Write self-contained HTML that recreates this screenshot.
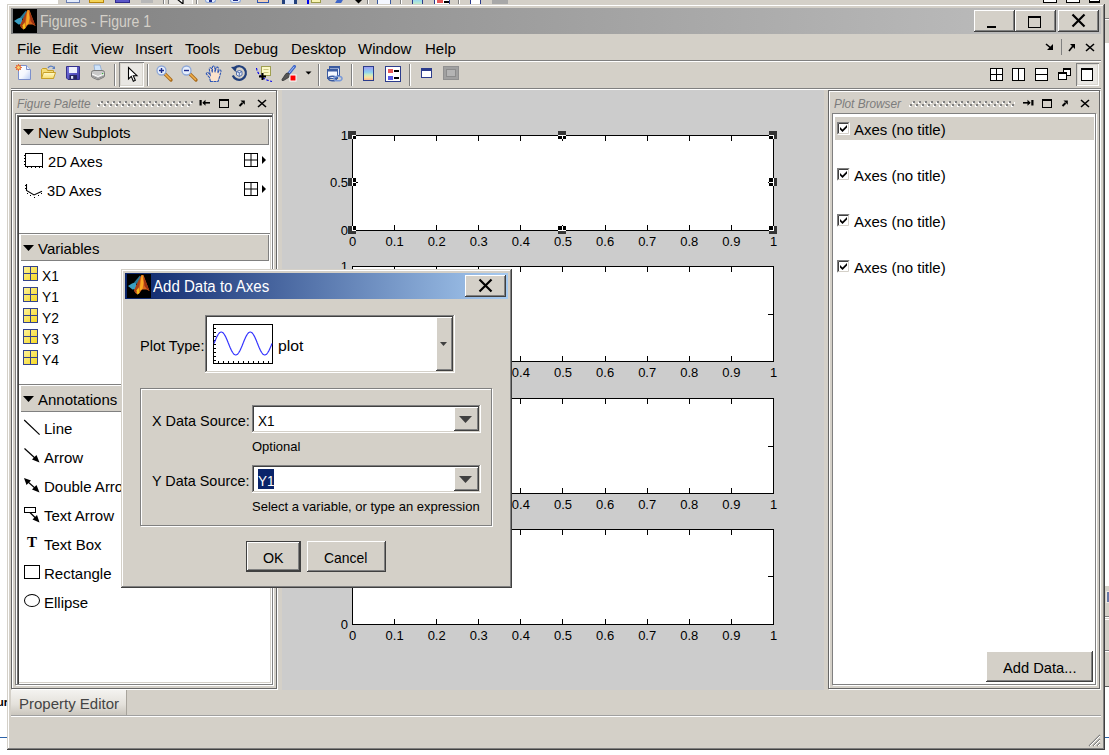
<!DOCTYPE html>
<html><head><meta charset="utf-8"><title>Figures - Figure 1</title>
<style>
html,body{margin:0;padding:0}
body{width:1109px;height:755px;overflow:hidden;background:#fff;position:relative;font-family:"Liberation Sans",sans-serif;font-size:15px;color:#000}
div,span,svg{position:absolute;box-sizing:border-box}
.t{white-space:nowrap;line-height:1;transform-origin:0 0}
.face{background:#d4d0c8}
.raised{box-shadow:inset -1px -1px #404040,inset 1px 1px #d4d0c8,inset -2px -2px #808080,inset 2px 2px #fff}
.btn{background:#d4d0c8;box-shadow:inset -1px -1px #404040,inset 1px 1px #fff,inset -2px -2px #808080,inset 2px 2px #d4d0c8}
.sunken{box-shadow:inset -1px -1px #fff,inset 1px 1px #808080,inset -2px -2px #d4d0c8,inset 2px 2px #404040}
.hl{background:#808080;height:1px}
.wl{background:#fff;height:1px}
.vl{background:#808080;width:1px}
.vw{background:#fff;width:1px}
.ax{background:#fff;border:1px solid #000}
.tk{background:#000}
.xl{font-size:13px;white-space:nowrap;line-height:1;width:40px;text-align:center}
.yl{font-size:13px;white-space:nowrap;line-height:1;width:40px;text-align:right}
.hd{background:#404040;width:7px;height:7px}
</style></head><body>
<!-- background windows behind -->
<div class="face" style="left:58px;top:0;width:1051px;height:5px"></div>
<div class="face" style="left:1105px;top:0;width:4px;height:43px"></div>
<div style="left:1105px;top:18px;width:4px;height:1px;background:#808080"></div><div style="left:1105px;top:19px;width:4px;height:1px;background:#fff"></div>
<div class="face" style="left:1105px;top:586px;width:4px;height:100px"></div><div style="left:1105px;top:686px;width:4px;height:1px;background:#606060"></div><div style="left:1106px;top:591px;width:3px;height:12px;background:#ece9e0"></div><div style="left:1107px;top:592px;width:2px;height:10px;background:#6878a8"></div>
<div style="left:1105px;top:616px;width:4px;height:1px;background:#808080"></div><div style="left:1105px;top:617px;width:4px;height:1px;background:#fff"></div><div style="left:1105px;top:619px;width:4px;height:1px;background:#fff"></div>
<div style="left:1105px;top:650px;width:4px;height:1px;background:#808080"></div><div style="left:1105px;top:651px;width:4px;height:1px;background:#fff"></div>
<div style="left:1105px;top:737px;width:4px;height:1px;background:#2c62a8"></div>
<div style="left:0;top:737px;width:7px;height:1px;background:#2c62a8"></div>
<span class="t" style="left:-3px;top:697px;font-size:11px;font-weight:bold">ur</span>
<!-- top strip icon fragments -->
<div style="left:66px;top:0;width:14px;height:3px;background:#e4ecfc;border:1px solid #6b7fb3;border-top:0"></div>
<div style="left:89px;top:0;width:15px;height:3px;background:#f4d458;border:1px solid #b8860b;border-top:0"></div>
<div style="left:115px;top:0;width:15px;height:3px;background:#5a55c8;border:1px solid #2f2a8c;border-top:0"></div>
<div style="left:141px;top:0;width:12px;height:3px;background:#b8b8b8"></div>
<div class="vl" style="left:163px;top:0;height:4px"></div><div class="vw" style="left:164px;top:0;height:4px"></div>
<div style="left:168px;top:0;width:25px;height:4px;background:#e9e7e3;border-right:1px solid #fff;border-left:1px solid #808080"></div>
<svg style="left:176px;top:0" width="11" height="4" viewBox="0 0 11 4"><path d="M1 -1 L7 4 L7 0" fill="#fff" stroke="#000" stroke-width="1.200"/></svg>
<div class="vl" style="left:196px;top:0;height:4px"></div><div class="vw" style="left:197px;top:0;height:4px"></div>
<div style="left:205px;top:0;width:11px;height:3px;background:#e6eefc;border:1px solid #8ea8d8;border-top:0;border-radius:0 0 6px 6px"></div><div style="left:209px;top:0;width:3px;height:2px;background:#1c2c8c"></div>
<div style="left:230px;top:0;width:11px;height:3px;background:#e6eefc;border:1px solid #8ea8d8;border-top:0;border-radius:0 0 6px 6px"></div><div style="left:233px;top:0;width:5px;height:1px;background:#1c2c8c"></div>
<div style="left:257px;top:0;width:12px;height:3px;background:#f0d0b8;border:1px solid #2c56b4;border-top:0"></div>
<div style="left:282px;top:0;width:15px;height:4px;border-left:3px solid #22407c;border-right:3px solid #22407c;background:#dfe8f8"></div>
<div style="left:307px;top:0;width:2px;height:4px;background:#0000ee"></div><div style="left:311px;top:0;width:10px;height:3px;background:#f8f4b4;border:1px solid #9c9c48;border-top:0"></div>
<div style="left:336px;top:0;width:6px;height:3px;background:#3e66c8;transform:skewX(-30deg)"></div>
<svg style="left:355px;top:0" width="7" height="4" viewBox="0 0 7 4"><path d="M0 0 L7 0 L3.500 3.500 Z" fill="#000"/></svg>
<div class="vl" style="left:367px;top:0;height:4px"></div><div class="vw" style="left:368px;top:0;height:4px"></div>
<div style="left:377px;top:0;width:14px;height:4px;background:#f4f7ff;border:1px solid #3a5aa0;border-top:0;border-bottom:0"></div>
<div class="vl" style="left:400px;top:0;height:4px"></div><div class="vw" style="left:401px;top:0;height:4px"></div>
<div style="left:412px;top:0;width:11px;height:4px;background:linear-gradient(#98d8f0,#c0ecc8);border:1px solid #2c3c8c;border-top:0;border-bottom:0"></div>
<div style="left:434px;top:0;width:16px;height:4px;background:#fff;border:1px solid #2c3c8c;border-top:0;border-bottom:0"></div><div style="left:437px;top:0;width:6px;height:3px;background:#e85858"></div><div style="left:444px;top:1px;width:5px;height:2px;background:#000"></div>
<div class="vl" style="left:458px;top:0;height:4px"></div><div class="vw" style="left:459px;top:0;height:4px"></div>
<div style="left:470px;top:0;width:11px;height:4px;background:#fff;border:1px solid #2c3c8c;border-top:0;border-bottom:0"></div>
<div style="left:492px;top:0;width:16px;height:4px;background:#a8a8a8"></div>
<div style="left:1043px;top:0;width:14px;height:3px;background:#fff;border:1px solid #000;border-top:0"></div>
<div style="left:1066px;top:0;width:14px;height:3px;background:#fff;border:1px solid #000;border-top:0"></div>
<div style="left:1089px;top:0;width:11px;height:3px;background:#fff;border:1px solid #000;border-top:0;border-bottom-width:2px"></div>
<div id="win" class="face raised" style="left:7px;top:4px;width:1098px;height:746px"></div>
<!-- title bar -->
<div id="title" style="left:11px;top:8px;width:1090px;height:26px;background:linear-gradient(to right,#808080,#c0c0c0)"></div>
<div style="left:13px;top:9px;width:24px;height:24px;background:#000"></div>
<svg style="left:13px;top:9px" width="24" height="24" viewBox="0 0 24 24">
<path d="M1 12 L5 9.500 L9 8 L9 15 L5.500 15.500 Z" fill="#3a9ec2"/>
<path d="M7 8.500 L13 1.500 L14 3 L10 10 Z" fill="#2b7896"/>
<path d="M7 16.500 L10 10 L14.500 1 L16.500 1 L19 8 L22.500 17 L19.500 15.500 L15 15.500 L12.500 19 L10.500 20.500 L8.500 19 Z" fill="#d8641c"/>
<path d="M7 16.500 L10 10 L13.500 3 L12.500 11 L10 17.500 L8.500 19 Z" fill="#a8401a"/>
<path d="M14.500 1.500 L15.500 1 L16.500 9 L15.500 15 L12.500 17 L13.500 9 Z" fill="#f7a823"/>
<path d="M16.500 3 L19 8 L22.500 17 L19.500 14.500 L17.500 12 Z" fill="#9c3214"/>
<path d="M9.500 16.500 L11.500 13.500 L12.500 19 L10.500 20.500 Z" fill="#f3c21b"/>
</svg>
<span class="t" style="left:40px;top:14px;font-size:16px;color:#d4d0c8;transform:scaleX(.88)">Figures - Figure 1</span>
<div class="btn" style="left:974px;top:10px;width:41px;height:22px"></div>
<div class="btn" style="left:1015px;top:10px;width:41px;height:22px"></div>
<div class="btn" style="left:1058px;top:10px;width:41px;height:22px"></div>
<div style="left:987px;top:26px;width:9px;height:2px;background:#000"></div>
<div style="left:1028px;top:16px;width:13px;height:12px;border:1px solid #000;border-top-width:2px"></div>
<svg style="left:1071px;top:13px" width="15" height="15" viewBox="0 0 15 15"><path d="M1.5 1.5 L13.5 13.5 M13.5 1.5 L1.5 13.5" stroke="#000" stroke-width="2.2" fill="none"/></svg>
<!-- menu bar -->
<span class="t" style="left:17px;top:41px">File</span>
<span class="t" style="left:52px;top:41px">Edit</span>
<span class="t" style="left:91px;top:41px">View</span>
<span class="t" style="left:135px;top:41px">Insert</span>
<span class="t" style="left:185px;top:41px">Tools</span>
<span class="t" style="left:234px;top:41px">Debug</span>
<span class="t" style="left:291px;top:41px">Desktop</span>
<span class="t" style="left:358px;top:41px">Window</span>
<span class="t" style="left:425px;top:41px">Help</span>
<svg style="left:1044px;top:41px" width="12" height="12" viewBox="0 0 12 12"><path d="M2 3 L8 8" stroke="#000" stroke-width="1.6"/><path d="M9 3 L9 9 L3 9 Z" fill="#000"/></svg>
<div class="vl" style="left:1061px;top:39px;height:16px"></div>
<svg style="left:1066px;top:41px" width="12" height="12" viewBox="0 0 12 12"><path d="M3 10 L7 5" stroke="#000" stroke-width="1.6"/><path d="M4 3 L9 3 L9 8 Z" fill="#000"/></svg>
<svg style="left:1085px;top:43px" width="10" height="10" viewBox="0 0 10 10"><path d="M1 1 L9 8 M9 1 L1 8" stroke="#000" stroke-width="1.6"/></svg>
<!-- toolbar separators -->
<div class="hl" style="left:11px;top:60px;width:1090px"></div>
<div class="wl" style="left:11px;top:61px;width:1090px"></div>
<div class="hl" style="left:11px;top:88px;width:1090px"></div>
<div class="wl" style="left:11px;top:89px;width:1090px"></div>
<!-- new -->
<svg style="left:15px;top:64px" width="17" height="17" viewBox="0 0 17 17">
<defs><linearGradient id="gpap" x1="0" y1="0" x2="1" y2="1"><stop offset="0" stop-color="#fff"/><stop offset=".55" stop-color="#f4f7fe"/><stop offset="1" stop-color="#b8ccf4"/></linearGradient></defs>
<path d="M3.500 1.500 L11.500 1.500 L15.500 5.500 L15.500 15.500 L3.500 15.500 Z" fill="url(#gpap)" stroke="#7c90cc" stroke-width="1"/>
<path d="M11.500 1.500 L11.500 5.500 L15.500 5.500" fill="#e4ecfc" stroke="#7c90cc" stroke-width="1"/>
<path d="M3.500 0 L3.500 7 M0 3.500 L7 3.500 M1 1 L6 6 M6 1 L1 6" stroke="#e8622c" stroke-width=".9"/>
<circle cx="3.500" cy="3.500" r="2" fill="#f8d070" stroke="#e8622c" stroke-width="1"/>
</svg>
<!-- open -->
<svg style="left:40px;top:64px" width="17" height="17" viewBox="0 0 17 17">
<defs><linearGradient id="gfol" x1="0" y1="0" x2="0" y2="1"><stop offset="0" stop-color="#fffbd0"/><stop offset="1" stop-color="#f6dc6c"/></linearGradient></defs>
<path d="M8 4 C9 1.5 12 1.5 14 3.5" fill="none" stroke="#5b7fc0" stroke-width="1.2"/><path d="M15 2 L15 5 L12 5 Z" fill="#5b7fc0"/>
<path d="M1.5 5.500 L1.500 14.500 L13.500 14.500 L13.500 6.500 L7.500 6.500 L6.500 4.500 L2.500 4.500 Z" fill="#f4dc78" stroke="#c8a028" stroke-width="1"/>
<path d="M1.5 14.500 L3.500 8.500 L15.500 8.500 L13.500 14.500 Z" fill="url(#gfol)" stroke="#c8a028" stroke-width="1"/>
</svg>
<!-- save -->
<svg style="left:66px;top:66px" width="15" height="15" viewBox="0 0 15 15">
<defs><linearGradient id="gsav" x1="0" y1="0" x2="1" y2="1"><stop offset="0" stop-color="#7c78e0"/><stop offset="1" stop-color="#3c38a8"/></linearGradient></defs>
<path d="M.5 .5 L13.500 .5 L13.500 13.500 L2 13.500 L.5 12 Z" fill="url(#gsav)" stroke="#34308c" stroke-width="1"/>
<rect x="3" y="1" width="8" height="6" fill="#eef0fc"/><rect x="3.500" y="9" width="7.500" height="4.500" fill="#26245c"/><rect x="5" y="10" width="2.200" height="2.800" fill="#dfe2f8"/>
</svg>
<!-- print -->
<svg style="left:90px;top:64px" width="17" height="17" viewBox="0 0 17 17">
<path d="M4 1 L10 1 L12 8 L5 8 Z" fill="#cfe4fb" stroke="#8aa8d0" stroke-width=".8"/>
<path d="M1.500 8.500 Q1.500 6.500 4 6.500 L12 6.500 Q14.500 6.500 14.500 8.500 L14.500 12 Q14.500 13 13 13.500 L9 15.500 Q8 16 7 15.500 L2.500 13.500 Q1.500 13 1.500 12 Z" fill="#c9c9c9" stroke="#7a7a7a" stroke-width="1"/>
<path d="M2 10 L8 12.500 L14 10" fill="none" stroke="#fff" stroke-width="1"/><path d="M2 12 L8 14.500 L14 12" fill="none" stroke="#8a8a8a" stroke-width="1"/>
<rect x="12" y="9" width="1.200" height="1.200" fill="#35b235"/>
</svg>
<div class="vl" style="left:114px;top:64px;height:22px"></div><div class="vw" style="left:115px;top:64px;height:22px"></div>
<!-- selected arrow button -->
<div style="left:119px;top:62px;width:25px;height:25px;background:#e9e7e3;box-shadow:inset 1px 1px #808080,inset -1px -1px #fff,inset 2px 2px #d8d5ce,inset -2px -2px #d8d5ce"></div>
<svg style="left:127px;top:66px" width="12" height="17" viewBox="0 0 12 17"><path d="M1.500 1.500 L1.500 13 L4.300 10.400 L6.300 15.200 L8.300 14.300 L6.300 9.700 L10 9.700 Z" fill="#fff" stroke="#000" stroke-width="1.100"/></svg>
<div class="vl" style="left:147px;top:64px;height:22px"></div><div class="vw" style="left:148px;top:64px;height:22px"></div>
<!-- zoom in -->
<svg style="left:156px;top:65px" width="17" height="17" viewBox="0 0 17 17">
<path d="M9 9 L15 15" stroke="#a86a1c" stroke-width="3.200" stroke-linecap="round"/><path d="M9.500 9.500 L14.500 14.500" stroke="#f2b04c" stroke-width="1.600" stroke-linecap="round"/>
<circle cx="5.500" cy="5.500" r="4.500" fill="#e6eefc" stroke="#8ea8d8" stroke-width="1.300"/>
<path d="M3 5.500 L8 5.500 M5.500 3 L5.500 8" stroke="#1c2c8c" stroke-width="1.400"/>
</svg>
<!-- zoom out -->
<svg style="left:181px;top:65px" width="17" height="17" viewBox="0 0 17 17">
<path d="M9 9 L15 15" stroke="#a86a1c" stroke-width="3.200" stroke-linecap="round"/><path d="M9.500 9.500 L14.500 14.500" stroke="#f2b04c" stroke-width="1.600" stroke-linecap="round"/>
<circle cx="5.500" cy="5.500" r="4.500" fill="#e6eefc" stroke="#8ea8d8" stroke-width="1.300"/>
<path d="M3 5.500 L8 5.500" stroke="#1c2c8c" stroke-width="1.400"/>
</svg>
<!-- hand -->
<svg style="left:205px;top:65px" width="18" height="17" viewBox="0 0 18 17">
<path d="M5.500 16.500 L4.500 12.500 L1.300 8.800 Q1.500 6.800 3.500 8 L5.200 10 L4.300 3.800 Q5 2 6.500 3.300 L7.300 7.500 L7.500 1.800 Q8.700 .3 9.800 1.800 L10 7.300 L11.200 2.600 Q12.500 1.500 13.300 3 L12.800 8 L14.300 5.200 Q15.800 4.500 16 6.300 L14.500 12 L13 16.500 Z" fill="#fbe2cc" stroke="#2c56b4" stroke-width="1.100" stroke-dasharray="3 .6"/>
</svg>
<!-- rotate -->
<svg style="left:230px;top:64px" width="18" height="18" viewBox="0 0 18 18">
<path d="M4.500 4 A6.800 6.800 0 1 1 2.800 11.500" fill="none" stroke="#22407c" stroke-width="2.200"/>
<path d="M1 3 L7 2.500 L5.500 8 Z" fill="#22407c"/>
<path d="M6.500 7.500 L9.500 6.500 L12 7.500 L12 11 L9.300 12.500 L6.500 11 Z" fill="#dfe8f8" stroke="#4a68a8" stroke-width=".9"/><path d="M6.500 7.500 L9.300 8.800 L12 7.500 M9.300 8.800 L9.300 12.500" fill="none" stroke="#4a68a8" stroke-width=".9"/>
</svg>
<!-- data cursor -->
<svg style="left:255px;top:65px" width="18" height="18" viewBox="0 0 18 18">
<path d="M1.500 3 Q3 13 17 16.500" fill="none" stroke="#0000ee" stroke-width="1.100" stroke-dasharray="2.500 1.500"/>
<rect x="6.500" y="1.500" width="9" height="9" fill="#fcf9c8" stroke="#a0a050" stroke-width="1"/>
<path d="M8.500 4.500 L13.500 4.500 M8.500 7.500 L13.500 7.500" stroke="#c8c480" stroke-width="1"/>
<path d="M4 11.500 L11 11.500 M7.500 8 L7.500 15" stroke="#000" stroke-width="2"/>
</svg>
<!-- brush -->
<svg style="left:280px;top:65px" width="18" height="18" viewBox="0 0 18 18">
<path d="M14.500 1.500 L8 9.500" stroke="#3e66c8" stroke-width="3" stroke-linecap="round"/><path d="M14 2 L9 8" stroke="#a8c4f8" stroke-width="1" stroke-linecap="round"/>
<path d="M8.500 8 L6 8.500 L2 14.500 Q1.500 16 3.500 15.500 L8.500 12.500 L10 10 Z" fill="#555" stroke="#333" stroke-width=".8"/>
<rect x="10" y="10" width="6" height="6" fill="#f00" stroke="#fff" stroke-width="1"/>
</svg>
<svg style="left:305px;top:71px" width="7" height="4" viewBox="0 0 7 4"><path d="M.5 .5 L6.500 .5 L3.500 3.500 Z" fill="#000"/></svg>
<div class="vl" style="left:318px;top:64px;height:22px"></div><div class="vw" style="left:319px;top:64px;height:22px"></div>
<!-- link -->
<svg style="left:326px;top:65px" width="18" height="18" viewBox="0 0 18 18">
<rect x="3.500" y="1.500" width="10" height="9" fill="#e8eefc" stroke="#3a5aa0" stroke-width="1"/><rect x="3.500" y="1.500" width="10" height="2" fill="#3a5aa0"/>
<rect x="1.500" y="4.500" width="10" height="9" fill="#f4f7ff" stroke="#3a5aa0" stroke-width="1"/><rect x="1.500" y="4.500" width="10" height="2" fill="#3a5aa0"/>
<ellipse cx="6.500" cy="13.500" rx="4" ry="2.300" fill="none" stroke="#3a5aa0" stroke-width="1.600"/>
<ellipse cx="12" cy="13.500" rx="4" ry="2.300" fill="none" stroke="#7a9ad8" stroke-width="1.600"/>
</svg>
<div class="vl" style="left:351px;top:64px;height:22px"></div><div class="vw" style="left:352px;top:64px;height:22px"></div>
<!-- colorbar -->
<div style="left:363px;top:66px;width:11px;height:15px;border:1px solid #2c3c8c;background:linear-gradient(to bottom,#9c9cf0,#8cd0f0 40%,#c8ecc0 60%,#f8e0a0 80%,#f8b890)"></div>
<!-- legend -->
<div style="left:385px;top:66px;width:16px;height:16px;border:1px solid #2c3c8c;background:#fff"></div>
<div style="left:388px;top:69px;width:5px;height:4px;background:#e85858"></div><div style="left:388px;top:76px;width:5px;height:4px;background:#5858e8"></div>
<div style="left:394px;top:70px;width:5px;height:2px;background:#000"></div><div style="left:394px;top:77px;width:5px;height:2px;background:#000"></div>
<div class="vl" style="left:409px;top:64px;height:22px"></div><div class="vw" style="left:410px;top:64px;height:22px"></div>
<!-- window -->
<div style="left:421px;top:68px;width:11px;height:10px;border:1px solid #2c3c8c;border-top-width:3px;background:#fff"></div>
<!-- film gray -->
<div style="left:443px;top:66px;width:16px;height:14px;background:#a0a0a0;border:1px solid #909090"></div>
<div style="left:446px;top:69px;width:10px;height:8px;background:#b4b4b4;border:1px solid #8c8c8c"></div>
<!-- right layout icons -->
<svg style="left:990px;top:68px" width="13" height="13" viewBox="0 0 13 13"><rect x=".5" y=".5" width="12" height="12" fill="#fff" stroke="#000"/><path d="M6.500 0 L6.500 13 M0 6.500 L13 6.500" stroke="#000"/></svg>
<svg style="left:1012px;top:68px" width="13" height="13" viewBox="0 0 13 13"><rect x=".5" y=".5" width="12" height="12" fill="#fff" stroke="#000"/><path d="M6.500 0 L6.500 13" stroke="#000"/></svg>
<svg style="left:1035px;top:68px" width="13" height="13" viewBox="0 0 13 13"><rect x=".5" y=".5" width="12" height="12" fill="#fff" stroke="#000"/><path d="M0 6.500 L13 6.500" stroke="#000"/></svg>
<div style="left:1063px;top:68px;width:8px;height:8px;background:#fff;border:1px solid #000;border-top-width:2px"></div><div style="left:1058px;top:72px;width:9px;height:8px;background:#fff;border:1px solid #000;border-top-width:2px"></div>
<div style="left:1076px;top:63px;width:23px;height:23px;background:#e9e7e3;box-shadow:inset 1px 1px #808080,inset -1px -1px #fff,inset 2px 2px #d8d5ce,inset -2px -2px #d8d5ce"></div>
<div style="left:1081px;top:68px;width:12px;height:13px;background:#fff;border:1px solid #000;border-top-width:2px"></div>

<!-- Figure Palette panel -->
<div style="left:12px;top:91px;width:266px;height:599px;border:1px solid #fff"></div>
<div style="left:11px;top:90px;width:266px;height:599px;border:1px solid #666"></div>
<span class="t" style="left:17px;top:97px;font-size:13px;font-style:italic;color:#7c7c7c;transform:scaleX(.91)">Figure Palette</span>
<svg style="left:97px;top:100px" width="96" height="7"><defs><pattern id="grip" width="6" height="7" patternUnits="userSpaceOnUse"><rect x="0" y="5" width="2" height="2" fill="#fff"/><rect x="1" y="4" width="2" height="2" fill="#808080"/><rect x="3" y="2" width="2" height="2" fill="#fff"/><rect x="4" y="1" width="2" height="2" fill="#808080"/></pattern></defs><rect width="96" height="7" fill="url(#grip)"/></svg>
<svg style="left:199px;top:98px" width="12" height="10" viewBox="0 0 12 10"><path d="M1.600 2 L1.600 7.500" stroke="#000" stroke-width="2.200"/><path d="M4 4.800 L11 4.800" stroke="#000" stroke-width="1.600"/><path d="M3.300 4.800 L6.500 1.800 L6.500 7.800 Z" fill="#000"/></svg>
<div style="left:219px;top:99px;width:10px;height:9px;border:1px solid #000;border-top-width:2px"></div>
<svg style="left:238px;top:99px" width="8" height="8" viewBox="0 0 8 8"><path d="M1.500 7 L4.500 4" stroke="#000" stroke-width="2"/><path d="M2.500 1.500 L6.800 1.500 L6.800 5.800 Z" fill="#000"/></svg>
<svg style="left:257px;top:99px" width="10" height="9" viewBox="0 0 10 9"><path d="M1 1 L9 8 M9 1 L1 8" stroke="#000" stroke-width="1.600"/></svg>
<!-- inner box -->
<div style="left:16px;top:114px;width:258px;height:572px;border:1px solid #fff"></div>
<div style="left:15px;top:113px;width:258px;height:572px;border:1px solid #808080"></div>
<div style="left:17px;top:115px;width:255px;height:569px;background:#fff;box-shadow:inset 1px 1px #707070,inset 2px 2px #404040,inset -1px -1px #fff,inset -2px -2px #d4d0c8"></div>
<!-- headers -->
<div class="face" style="left:20px;top:118px;width:249px;height:27px;box-shadow:inset 1px 1px #fff,inset -1px -1px #808080"></div>
<svg style="left:23px;top:129px" width="11" height="6" viewBox="0 0 11 6"><path d="M0 0 L11 0 L5.500 6 Z" fill="#000"/></svg>
<span class="t" style="left:38px;top:125px">New Subplots</span>
<div class="hl" style="left:19px;top:233px;width:251px"></div><div class="face" style="left:20px;top:234px;width:249px;height:27px;box-shadow:inset 1px 1px #fff,inset -1px -1px #808080"></div>
<svg style="left:23px;top:245px" width="11" height="6" viewBox="0 0 11 6"><path d="M0 0 L11 0 L5.500 6 Z" fill="#000"/></svg>
<span class="t" style="left:38px;top:241px">Variables</span>
<div class="hl" style="left:19px;top:384px;width:251px"></div><div class="face" style="left:20px;top:385px;width:249px;height:27px;box-shadow:inset 1px 1px #fff,inset -1px -1px #808080"></div>
<svg style="left:23px;top:396px" width="11" height="6" viewBox="0 0 11 6"><path d="M0 0 L11 0 L5.500 6 Z" fill="#000"/></svg>
<span class="t" style="left:38px;top:392px">Annotations</span>
<!-- subplots items -->
<svg style="left:23px;top:152px" width="21" height="17" viewBox="0 0 21 17" shape-rendering="crispEdges"><rect x="2.500" y="1.500" width="17" height="13" fill="#fff" stroke="#000" stroke-width="1"/><path d="M1 3.500 L2 3.500 M1 6.500 L2 6.500 M1 9.500 L2 9.500 M1 12.500 L2 12.500 M4.500 15 L4.500 16 M8.500 15 L8.500 16 M12.500 15 L12.500 16 M16.500 15 L16.500 16 M19.500 15 L19.500 16" stroke="#000" stroke-width="1"/></svg>
<span class="t" style="left:48px;top:154px;transform:scaleX(.975)">2D Axes</span>
<svg style="left:23px;top:181px" width="21" height="17" viewBox="0 0 21 17"><path d="M3.500 3 L3.500 9.500 L11 14 L19 10.300" fill="none" stroke="#000" stroke-width="1.100"/><path d="M2 4.500 L3 4.500 M2 7.500 L3 7.500" stroke="#000" stroke-width="1"/><g fill="#000"><rect x="4" y="12" width="1" height="1"/><rect x="7" y="14" width="1" height="1"/><rect x="11" y="16" width="1" height="1"/><rect x="15" y="14" width="1" height="1"/><rect x="18" y="12" width="1" height="1"/></g></svg>
<span class="t" style="left:47px;top:183px;transform:scaleX(.975)">3D Axes</span>
<svg style="left:244px;top:153px" width="14" height="14" viewBox="0 0 14 14"><rect x=".5" y=".5" width="13" height="13" fill="#fff" stroke="#000"/><path d="M7 0 L7 14 M0 7 L14 7" stroke="#000"/></svg>
<svg style="left:262px;top:156px" width="4" height="8" viewBox="0 0 4 8"><path d="M0 0 L4 4 L0 8 Z" fill="#000"/></svg>
<svg style="left:244px;top:182px" width="14" height="14" viewBox="0 0 14 14"><rect x=".5" y=".5" width="13" height="13" fill="#fff" stroke="#000"/><path d="M7 0 L7 14 M0 7 L14 7" stroke="#000"/></svg>
<svg style="left:262px;top:185px" width="4" height="8" viewBox="0 0 4 8"><path d="M0 0 L4 4 L0 8 Z" fill="#000"/></svg>
<!-- variables -->
<svg width="0" height="0"><defs><linearGradient id="gy" x1="0" y1="0" x2="1" y2="1"><stop offset="0" stop-color="#fdf29a"/><stop offset="1" stop-color="#f6d820"/></linearGradient><g id="vicon"><rect x=".5" y=".5" width="14" height="14" fill="url(#gy)" stroke="#34448c"/><path d="M7.500 0 L7.500 15 M0 7.500 L15 7.500" stroke="#34448c" stroke-width="1"/></g></defs></svg>
<svg style="left:23px;top:266px" width="15" height="15"><use href="#vicon"/></svg><span class="t" style="left:42px;top:268px;transform:scaleX(.92)">X1</span>
<svg style="left:23px;top:287px" width="15" height="15"><use href="#vicon"/></svg><span class="t" style="left:42px;top:289px;transform:scaleX(.92)">Y1</span>
<svg style="left:23px;top:308px" width="15" height="15"><use href="#vicon"/></svg><span class="t" style="left:42px;top:310px;transform:scaleX(.92)">Y2</span>
<svg style="left:23px;top:329px" width="15" height="15"><use href="#vicon"/></svg><span class="t" style="left:42px;top:331px;transform:scaleX(.92)">Y3</span>
<svg style="left:23px;top:350px" width="15" height="15"><use href="#vicon"/></svg><span class="t" style="left:42px;top:352px;transform:scaleX(.92)">Y4</span>
<!-- annotations -->
<svg style="left:23px;top:419px" width="18" height="17" viewBox="0 0 18 17"><path d="M1.200 1 L16.600 15.600" stroke="#000" stroke-width="1.200"/></svg>
<span class="t" style="left:44px;top:421px">Line</span>
<svg style="left:23px;top:447px" width="18" height="17" viewBox="0 0 18 17"><path d="M1.500 1.500 L13 12" stroke="#000" stroke-width="1.200"/><path d="M16.500 15.500 L9 12.500 L13.500 8 Z" fill="#000"/></svg>
<span class="t" style="left:44px;top:450px">Arrow</span>
<svg style="left:23px;top:477px" width="18" height="17" viewBox="0 0 18 17"><path d="M4 4 L13 12" stroke="#000" stroke-width="1.200"/><path d="M16.500 15.500 L9 12.500 L13.500 8 Z" fill="#000"/><path d="M1 1 L8 3.500 L3.500 8 Z" fill="#000"/></svg>
<span class="t" style="left:44px;top:479px">Double Arrow</span>
<svg style="left:23px;top:506px" width="18" height="18" viewBox="0 0 18 18"><rect x="1.500" y="1.500" width="11" height="5" fill="#fff" stroke="#000" stroke-width="1"/><path d="M7 6.500 L13.500 13" stroke="#000" stroke-width="1.200"/><path d="M16.500 16.500 L9.500 13.500 L14 9 Z" fill="#000"/></svg>
<span class="t" style="left:44px;top:508px">Text Arrow</span>
<span class="t" style="left:27px;top:535px;font-family:'Liberation Serif',serif;font-weight:bold;font-size:15px">T</span>
<span class="t" style="left:44px;top:537px">Text Box</span>
<div style="left:24px;top:565px;width:16px;height:14px;border:1px solid #000;background:#fff"></div>
<span class="t" style="left:44px;top:566px">Rectangle</span>
<div style="left:24px;top:594px;width:16px;height:13px;border:1px solid #000;border-radius:50%;background:#fff"></div>
<span class="t" style="left:44px;top:595px">Ellipse</span>

<div style="left:282px;top:90px;width:542px;height:600px;background:#ccc"></div>
<div class="ax" style="left:352px;top:135px;width:422px;height:96px"></div>
<div class="tk" style="left:394px;top:225px;width:1px;height:5px"></div>
<div class="tk" style="left:394px;top:136px;width:1px;height:5px"></div>
<div class="tk" style="left:436px;top:225px;width:1px;height:5px"></div>
<div class="tk" style="left:436px;top:136px;width:1px;height:5px"></div>
<div class="tk" style="left:478px;top:225px;width:1px;height:5px"></div>
<div class="tk" style="left:478px;top:136px;width:1px;height:5px"></div>
<div class="tk" style="left:520px;top:225px;width:1px;height:5px"></div>
<div class="tk" style="left:520px;top:136px;width:1px;height:5px"></div>
<div class="tk" style="left:562px;top:225px;width:1px;height:5px"></div>
<div class="tk" style="left:562px;top:136px;width:1px;height:5px"></div>
<div class="tk" style="left:605px;top:225px;width:1px;height:5px"></div>
<div class="tk" style="left:605px;top:136px;width:1px;height:5px"></div>
<div class="tk" style="left:647px;top:225px;width:1px;height:5px"></div>
<div class="tk" style="left:647px;top:136px;width:1px;height:5px"></div>
<div class="tk" style="left:689px;top:225px;width:1px;height:5px"></div>
<div class="tk" style="left:689px;top:136px;width:1px;height:5px"></div>
<div class="tk" style="left:731px;top:225px;width:1px;height:5px"></div>
<div class="tk" style="left:731px;top:136px;width:1px;height:5px"></div>
<div class="tk" style="left:353px;top:182px;width:5px;height:1px"></div>
<div class="tk" style="left:768px;top:182px;width:5px;height:1px"></div>
<span class="xl" style="left:332.5px;top:235px">0</span>
<span class="xl" style="left:374.6px;top:235px">0.1</span>
<span class="xl" style="left:416.7px;top:235px">0.2</span>
<span class="xl" style="left:458.8px;top:235px">0.3</span>
<span class="xl" style="left:500.9px;top:235px">0.4</span>
<span class="xl" style="left:543.0px;top:235px">0.5</span>
<span class="xl" style="left:585.1px;top:235px">0.6</span>
<span class="xl" style="left:627.2px;top:235px">0.7</span>
<span class="xl" style="left:669.3px;top:235px">0.8</span>
<span class="xl" style="left:711.4px;top:235px">0.9</span>
<span class="xl" style="left:753.5px;top:235px">1</span>
<span class="yl" style="left:308px;top:224px">0</span>
<span class="yl" style="left:308px;top:176px">0.5</span>
<span class="yl" style="left:308px;top:129px">1</span>
<div class="ax" style="left:352px;top:266px;width:422px;height:96px"></div>
<div class="tk" style="left:394px;top:356px;width:1px;height:5px"></div>
<div class="tk" style="left:394px;top:267px;width:1px;height:5px"></div>
<div class="tk" style="left:436px;top:356px;width:1px;height:5px"></div>
<div class="tk" style="left:436px;top:267px;width:1px;height:5px"></div>
<div class="tk" style="left:478px;top:356px;width:1px;height:5px"></div>
<div class="tk" style="left:478px;top:267px;width:1px;height:5px"></div>
<div class="tk" style="left:520px;top:356px;width:1px;height:5px"></div>
<div class="tk" style="left:520px;top:267px;width:1px;height:5px"></div>
<div class="tk" style="left:562px;top:356px;width:1px;height:5px"></div>
<div class="tk" style="left:562px;top:267px;width:1px;height:5px"></div>
<div class="tk" style="left:605px;top:356px;width:1px;height:5px"></div>
<div class="tk" style="left:605px;top:267px;width:1px;height:5px"></div>
<div class="tk" style="left:647px;top:356px;width:1px;height:5px"></div>
<div class="tk" style="left:647px;top:267px;width:1px;height:5px"></div>
<div class="tk" style="left:689px;top:356px;width:1px;height:5px"></div>
<div class="tk" style="left:689px;top:267px;width:1px;height:5px"></div>
<div class="tk" style="left:731px;top:356px;width:1px;height:5px"></div>
<div class="tk" style="left:731px;top:267px;width:1px;height:5px"></div>
<div class="tk" style="left:353px;top:314px;width:5px;height:1px"></div>
<div class="tk" style="left:768px;top:314px;width:5px;height:1px"></div>
<span class="xl" style="left:332.5px;top:366px">0</span>
<span class="xl" style="left:374.6px;top:366px">0.1</span>
<span class="xl" style="left:416.7px;top:366px">0.2</span>
<span class="xl" style="left:458.8px;top:366px">0.3</span>
<span class="xl" style="left:500.9px;top:366px">0.4</span>
<span class="xl" style="left:543.0px;top:366px">0.5</span>
<span class="xl" style="left:585.1px;top:366px">0.6</span>
<span class="xl" style="left:627.2px;top:366px">0.7</span>
<span class="xl" style="left:669.3px;top:366px">0.8</span>
<span class="xl" style="left:711.4px;top:366px">0.9</span>
<span class="xl" style="left:753.5px;top:366px">1</span>
<span class="yl" style="left:308px;top:355px">0</span>
<span class="yl" style="left:308px;top:308px">0.5</span>
<span class="yl" style="left:308px;top:260px">1</span>
<div class="ax" style="left:352px;top:398px;width:422px;height:96px"></div>
<div class="tk" style="left:394px;top:488px;width:1px;height:5px"></div>
<div class="tk" style="left:394px;top:399px;width:1px;height:5px"></div>
<div class="tk" style="left:436px;top:488px;width:1px;height:5px"></div>
<div class="tk" style="left:436px;top:399px;width:1px;height:5px"></div>
<div class="tk" style="left:478px;top:488px;width:1px;height:5px"></div>
<div class="tk" style="left:478px;top:399px;width:1px;height:5px"></div>
<div class="tk" style="left:520px;top:488px;width:1px;height:5px"></div>
<div class="tk" style="left:520px;top:399px;width:1px;height:5px"></div>
<div class="tk" style="left:562px;top:488px;width:1px;height:5px"></div>
<div class="tk" style="left:562px;top:399px;width:1px;height:5px"></div>
<div class="tk" style="left:605px;top:488px;width:1px;height:5px"></div>
<div class="tk" style="left:605px;top:399px;width:1px;height:5px"></div>
<div class="tk" style="left:647px;top:488px;width:1px;height:5px"></div>
<div class="tk" style="left:647px;top:399px;width:1px;height:5px"></div>
<div class="tk" style="left:689px;top:488px;width:1px;height:5px"></div>
<div class="tk" style="left:689px;top:399px;width:1px;height:5px"></div>
<div class="tk" style="left:731px;top:488px;width:1px;height:5px"></div>
<div class="tk" style="left:731px;top:399px;width:1px;height:5px"></div>
<div class="tk" style="left:353px;top:446px;width:5px;height:1px"></div>
<div class="tk" style="left:768px;top:446px;width:5px;height:1px"></div>
<span class="xl" style="left:332.5px;top:498px">0</span>
<span class="xl" style="left:374.6px;top:498px">0.1</span>
<span class="xl" style="left:416.7px;top:498px">0.2</span>
<span class="xl" style="left:458.8px;top:498px">0.3</span>
<span class="xl" style="left:500.9px;top:498px">0.4</span>
<span class="xl" style="left:543.0px;top:498px">0.5</span>
<span class="xl" style="left:585.1px;top:498px">0.6</span>
<span class="xl" style="left:627.2px;top:498px">0.7</span>
<span class="xl" style="left:669.3px;top:498px">0.8</span>
<span class="xl" style="left:711.4px;top:498px">0.9</span>
<span class="xl" style="left:753.5px;top:498px">1</span>
<span class="yl" style="left:308px;top:487px">0</span>
<span class="yl" style="left:308px;top:440px">0.5</span>
<span class="yl" style="left:308px;top:392px">1</span>
<div class="ax" style="left:352px;top:529px;width:422px;height:96px"></div>
<div class="tk" style="left:394px;top:619px;width:1px;height:5px"></div>
<div class="tk" style="left:394px;top:530px;width:1px;height:5px"></div>
<div class="tk" style="left:436px;top:619px;width:1px;height:5px"></div>
<div class="tk" style="left:436px;top:530px;width:1px;height:5px"></div>
<div class="tk" style="left:478px;top:619px;width:1px;height:5px"></div>
<div class="tk" style="left:478px;top:530px;width:1px;height:5px"></div>
<div class="tk" style="left:520px;top:619px;width:1px;height:5px"></div>
<div class="tk" style="left:520px;top:530px;width:1px;height:5px"></div>
<div class="tk" style="left:562px;top:619px;width:1px;height:5px"></div>
<div class="tk" style="left:562px;top:530px;width:1px;height:5px"></div>
<div class="tk" style="left:605px;top:619px;width:1px;height:5px"></div>
<div class="tk" style="left:605px;top:530px;width:1px;height:5px"></div>
<div class="tk" style="left:647px;top:619px;width:1px;height:5px"></div>
<div class="tk" style="left:647px;top:530px;width:1px;height:5px"></div>
<div class="tk" style="left:689px;top:619px;width:1px;height:5px"></div>
<div class="tk" style="left:689px;top:530px;width:1px;height:5px"></div>
<div class="tk" style="left:731px;top:619px;width:1px;height:5px"></div>
<div class="tk" style="left:731px;top:530px;width:1px;height:5px"></div>
<div class="tk" style="left:353px;top:576px;width:5px;height:1px"></div>
<div class="tk" style="left:768px;top:576px;width:5px;height:1px"></div>
<span class="xl" style="left:332.5px;top:629px">0</span>
<span class="xl" style="left:374.6px;top:629px">0.1</span>
<span class="xl" style="left:416.7px;top:629px">0.2</span>
<span class="xl" style="left:458.8px;top:629px">0.3</span>
<span class="xl" style="left:500.9px;top:629px">0.4</span>
<span class="xl" style="left:543.0px;top:629px">0.5</span>
<span class="xl" style="left:585.1px;top:629px">0.6</span>
<span class="xl" style="left:627.2px;top:629px">0.7</span>
<span class="xl" style="left:669.3px;top:629px">0.8</span>
<span class="xl" style="left:711.4px;top:629px">0.9</span>
<span class="xl" style="left:753.5px;top:629px">1</span>
<span class="yl" style="left:308px;top:618px">0</span>
<span class="yl" style="left:308px;top:570px">0.5</span>
<span class="yl" style="left:308px;top:523px">1</span>
<div style="left:348px;top:131px;width:8px;height:8px;background:#333"></div>
<div style="left:353px;top:136px;width:3px;height:3px;background:#000"></div>
<div style="left:352px;top:135px;width:1px;height:4px;background:#fff"></div>
<div style="left:352px;top:135px;width:4px;height:1px;background:#fff"></div>
<div style="left:558px;top:131px;width:8px;height:8px;background:#333"></div>
<div style="left:558px;top:136px;width:8px;height:3px;background:#000"></div>
<div style="left:558px;top:135px;width:8px;height:1px;background:#fff"></div>
<div style="left:562px;top:136px;width:1px;height:3px;background:#fff"></div>
<div style="left:769px;top:131px;width:8px;height:8px;background:#333"></div>
<div style="left:769px;top:136px;width:4px;height:3px;background:#000"></div>
<div style="left:773px;top:135px;width:1px;height:4px;background:#fff"></div>
<div style="left:769px;top:135px;width:5px;height:1px;background:#fff"></div>
<div style="left:348px;top:178px;width:8px;height:8px;background:#333"></div>
<div style="left:353px;top:178px;width:3px;height:8px;background:#000"></div>
<div style="left:352px;top:178px;width:1px;height:8px;background:#fff"></div>
<div style="left:353px;top:182px;width:3px;height:1px;background:#fff"></div>
<div style="left:769px;top:178px;width:8px;height:8px;background:#333"></div>
<div style="left:769px;top:178px;width:4px;height:8px;background:#000"></div>
<div style="left:773px;top:178px;width:1px;height:8px;background:#fff"></div>
<div style="left:769px;top:182px;width:4px;height:1px;background:#fff"></div>
<div style="left:348px;top:226px;width:8px;height:8px;background:#333"></div>
<div style="left:353px;top:226px;width:3px;height:4px;background:#000"></div>
<div style="left:352px;top:226px;width:1px;height:5px;background:#fff"></div>
<div style="left:352px;top:230px;width:4px;height:1px;background:#fff"></div>
<div style="left:558px;top:226px;width:8px;height:8px;background:#333"></div>
<div style="left:558px;top:226px;width:8px;height:4px;background:#000"></div>
<div style="left:558px;top:230px;width:8px;height:1px;background:#fff"></div>
<div style="left:562px;top:226px;width:1px;height:4px;background:#fff"></div>
<div style="left:769px;top:226px;width:8px;height:8px;background:#333"></div>
<div style="left:769px;top:226px;width:4px;height:4px;background:#000"></div>
<div style="left:773px;top:226px;width:1px;height:5px;background:#fff"></div>
<div style="left:769px;top:230px;width:5px;height:1px;background:#fff"></div>

<!-- Plot Browser panel -->
<div style="left:829px;top:91px;width:272px;height:599px;border:1px solid #fff"></div>
<div style="left:828px;top:90px;width:272px;height:599px;border:1px solid #666"></div>
<span class="t" style="left:834px;top:97px;font-size:13px;font-style:italic;color:#7c7c7c;transform:scaleX(.91)">Plot Browser</span>
<svg style="left:909px;top:100px" width="106" height="7"><rect width="106" height="7" fill="url(#grip)"/></svg>
<svg style="left:1022px;top:98px" width="12" height="10" viewBox="0 0 12 10"><path d="M10.400 2 L10.400 7.500" stroke="#000" stroke-width="2.200"/><path d="M1 4.800 L8 4.800" stroke="#000" stroke-width="1.600"/><path d="M8.700 4.800 L5.500 1.800 L5.500 7.800 Z" fill="#000"/></svg>
<div style="left:1042px;top:99px;width:10px;height:9px;border:1px solid #000;border-top-width:2px"></div>
<svg style="left:1061px;top:99px" width="8" height="8" viewBox="0 0 8 8"><path d="M1.500 7 L4.500 4" stroke="#000" stroke-width="2"/><path d="M2.500 1.500 L6.800 1.500 L6.800 5.800 Z" fill="#000"/></svg>
<svg style="left:1080px;top:99px" width="10" height="9" viewBox="0 0 10 9"><path d="M1 1 L9 8 M9 1 L1 8" stroke="#000" stroke-width="1.600"/></svg>
<div style="left:833px;top:114px;width:264px;height:572px;border:1px solid #fff;background:#fff"></div>
<div style="left:832px;top:113px;width:264px;height:572px;border:1px solid #808080"></div>
<div class="face" style="left:835px;top:117px;width:259px;height:23px"></div>
<svg width="0" height="0"><defs><g id="chk"><rect x="0" y="0" width="13" height="13" fill="#fff"/><path d="M0 12.500 L0 0 L12.500 0" fill="none" stroke="#808080" stroke-width="2"/><path d="M1.500 11.500 L1.500 1.500 L11.500 1.500" fill="none" stroke="#404040" stroke-width="1"/><path d="M.5 12.500 L12.500 12.500 L12.500 .5" fill="none" stroke="#fff" stroke-width="1"/><path d="M1.500 11.500 L11.500 11.500 L11.500 1.500" fill="none" stroke="#d4d0c8" stroke-width="1"/><path d="M3 5 L5.500 7.500 L10 3 L10 5.500 L5.500 10 L3 7.500 Z" fill="#000"/></g></defs></svg>
<svg style="left:837px;top:122px" width="13" height="13"><use href="#chk"/></svg><span class="t" style="left:854px;top:122px">Axes (no title)</span>
<svg style="left:837px;top:168px" width="13" height="13"><use href="#chk"/></svg><span class="t" style="left:854px;top:168px">Axes (no title)</span>
<svg style="left:837px;top:214px" width="13" height="13"><use href="#chk"/></svg><span class="t" style="left:854px;top:214px">Axes (no title)</span>
<svg style="left:837px;top:260px" width="13" height="13"><use href="#chk"/></svg><span class="t" style="left:854px;top:260px">Axes (no title)</span>
<div class="btn" style="left:986px;top:651px;width:107px;height:31px"></div>
<span class="t" style="left:1003px;top:660px;transform:scaleX(.98)">Add Data...</span>

<!-- Property Editor tab + status -->
<div style="left:11px;top:690px;width:116px;height:26px;background:linear-gradient(to bottom,#f4f3f0 0%,#e4e1db 55%,#c8c4bb 100%);border-right:1px solid #a8a49c"></div>
<span class="t" style="left:19px;top:696px;font-size:15px;color:#444">Property Editor</span>
<div class="wl" style="left:11px;top:716px;width:1090px"></div>
<div class="hl" style="left:11px;top:715px;width:1090px;background:#a0a0a0"></div>
<svg style="left:1088px;top:734px" width="13" height="13" viewBox="0 0 13 13"><path d="M12 1 L1 12 M12 5 L5 12 M12 9 L9 12" stroke="#808080" stroke-width="1.200"/><path d="M12 2 L2 12 M12 6 L6 12 M12 10 L10 12" stroke="#fff" stroke-width="1"/></svg>

<!-- Add Data to Axes dialog -->
<div class="face raised" style="left:121px;top:269px;width:391px;height:319px"></div>
<div style="left:125px;top:273px;width:383px;height:26px;background:linear-gradient(to right,#0a246a,#a6caf0)"></div>
<div style="left:127px;top:274px;width:24px;height:24px;background:#000"></div>
<svg style="left:127px;top:274px" width="24" height="24" viewBox="0 0 24 24">
<path d="M1 12 L5 9.500 L9 8 L9 15 L5.500 15.500 Z" fill="#3a9ec2"/>
<path d="M7 8.500 L13 1.500 L14 3 L10 10 Z" fill="#2b7896"/>
<path d="M7 16.500 L10 10 L14.500 1 L16.500 1 L19 8 L22.500 17 L19.500 15.500 L15 15.500 L12.500 19 L10.500 20.500 L8.500 19 Z" fill="#d8641c"/>
<path d="M7 16.500 L10 10 L13.500 3 L12.500 11 L10 17.500 L8.500 19 Z" fill="#a8401a"/>
<path d="M14.500 1.500 L15.500 1 L16.500 9 L15.500 15 L12.500 17 L13.500 9 Z" fill="#f7a823"/>
<path d="M16.500 3 L19 8 L22.500 17 L19.500 14.500 L17.500 12 Z" fill="#9c3214"/>
<path d="M9.500 16.500 L11.500 13.500 L12.500 19 L10.500 20.500 Z" fill="#f3c21b"/>
</svg>
<span class="t" style="left:153px;top:279px;font-size:16px;color:#fff;transform:scaleX(.94)">Add Data to Axes</span>
<div class="btn" style="left:465px;top:275px;width:41px;height:22px"></div>
<svg style="left:478px;top:278px" width="15" height="15" viewBox="0 0 15 15"><path d="M1.500 1.500 L13.500 13.500 M13.500 1.500 L1.500 13.500" stroke="#000" stroke-width="2.200" fill="none"/></svg>
<span class="t" style="left:140px;top:338px;transform:scaleX(.97)">Plot Type:</span>
<div class="sunken" style="left:205px;top:315px;width:250px;height:58px;background:#fff"></div>
<div class="btn" style="left:436px;top:317px;width:17px;height:54px;box-shadow:inset -1px -1px #404040,inset 1px 1px #fff,inset -2px -2px #808080"></div>
<svg style="left:440px;top:342px" width="7" height="4" viewBox="0 0 7 4"><path d="M0 0 L7 0 L3.500 4 Z" fill="#404040"/></svg>
<svg style="left:213px;top:324px" width="60" height="40" viewBox="0 0 60 40"><rect x=".5" y=".5" width="59" height="39" fill="#fff" stroke="#000"/><path d="M1 4.5 L3 4.5 M1 8.5 L3 8.5 M1 12.5 L3 12.5 M1 16.5 L3 16.5 M1 20.5 L3 20.5 M1 24.5 L3 24.5 M1 28.5 L3 28.5 M1 32.5 L3 32.5 M1 36.5 L3 36.5 M5.5 37 L5.5 39 M10.5 37 L10.5 39 M15.5 37 L15.5 39 M20.5 37 L20.5 39 M25.5 37 L25.5 39 M30.5 37 L30.5 39 M35.5 37 L35.5 39 M40.5 37 L40.5 39 M45.5 37 L45.5 39 M50.5 37 L50.5 39 M55.5 37 L55.5 39" stroke="#000" stroke-width="1"/><path d="M1.0 19.5 L1.5 18.3 L2.0 17.0 L2.5 15.8 L3.0 14.7 L3.5 13.6 L4.0 12.5 L4.5 11.6 L5.0 10.7 L5.5 10.0 L6.0 9.3 L6.5 8.8 L7.0 8.4 L7.5 8.2 L8.0 8.0 L8.5 8.0 L9.0 8.2 L9.5 8.4 L10.0 8.8 L10.5 9.3 L11.0 10.0 L11.5 10.7 L12.0 11.6 L12.5 12.5 L13.0 13.6 L13.5 14.7 L14.0 15.8 L14.5 17.0 L15.0 18.3 L15.5 19.5 L16.0 20.7 L16.5 22.0 L17.0 23.2 L17.5 24.3 L18.0 25.4 L18.5 26.5 L19.0 27.4 L19.5 28.3 L20.0 29.0 L20.5 29.7 L21.0 30.2 L21.5 30.6 L22.0 30.8 L22.5 31.0 L23.0 31.0 L23.5 30.8 L24.0 30.6 L24.5 30.2 L25.0 29.7 L25.5 29.0 L26.0 28.3 L26.5 27.4 L27.0 26.5 L27.5 25.4 L28.0 24.3 L28.5 23.2 L29.0 22.0 L29.5 20.7 L30.0 19.5 L30.5 18.3 L31.0 17.0 L31.5 15.8 L32.0 14.7 L32.5 13.6 L33.0 12.5 L33.5 11.6 L34.0 10.7 L34.5 10.0 L35.0 9.3 L35.5 8.8 L36.0 8.4 L36.5 8.2 L37.0 8.0 L37.5 8.0 L38.0 8.2 L38.5 8.4 L39.0 8.8 L39.5 9.3 L40.0 10.0 L40.5 10.7 L41.0 11.6 L41.5 12.5 L42.0 13.6 L42.5 14.7 L43.0 15.8 L43.5 17.0 L44.0 18.3 L44.5 19.5 L45.0 20.7 L45.5 22.0 L46.0 23.2 L46.5 24.3 L47.0 25.4 L47.5 26.5 L48.0 27.4 L48.5 28.3 L49.0 29.0 L49.5 29.7 L50.0 30.2 L50.5 30.6 L51.0 30.8 L51.5 31.0 L52.0 31.0 L52.5 30.8 L53.0 30.6 L53.5 30.2 L54.0 29.7 L54.5 29.0 L55.0 28.3 L55.5 27.4 L56.0 26.5 L56.5 25.4 L57.0 24.3 L57.5 23.2 L58.0 22.0 L58.5 20.7 L59.0 19.5" fill="none" stroke="#3434ff" stroke-width="1.200"/></svg>
<span class="t" style="left:278px;top:338px;transform:scaleX(1.05)">plot</span>
<div style="left:141px;top:389px;width:352px;height:138px;border:1px solid #fff"></div>
<div style="left:140px;top:388px;width:352px;height:138px;border:1px solid #808080"></div>
<span class="t" style="left:152px;top:413px;transform:scaleX(.96)">X Data Source:</span>
<div class="sunken" style="left:252px;top:405px;width:229px;height:28px;background:#fff"></div>
<span class="t" style="left:258px;top:413px;transform:scaleX(.9)">X1</span>
<div class="btn" style="left:454px;top:407px;width:25px;height:24px;box-shadow:inset -1px -1px #404040,inset 1px 1px #fff,inset -2px -2px #808080"></div>
<svg style="left:459px;top:416px" width="13" height="7" viewBox="0 0 13 7"><path d="M0 0 L13 0 L6.500 7 Z" fill="#404040"/></svg>
<span class="t" style="left:152px;top:473px;transform:scaleX(.96)">Y Data Source:</span>
<div class="sunken" style="left:252px;top:465px;width:229px;height:28px;background:#fff"></div>
<div style="left:258px;top:469px;width:16px;height:20px;background:#0a246a"></div>
<span class="t" style="left:258px;top:473px;color:#fff;transform:scaleX(.9)">Y1</span>
<div class="btn" style="left:454px;top:467px;width:25px;height:24px;box-shadow:inset -1px -1px #404040,inset 1px 1px #fff,inset -2px -2px #808080"></div>
<svg style="left:459px;top:476px" width="13" height="7" viewBox="0 0 13 7"><path d="M0 0 L13 0 L6.500 7 Z" fill="#404040"/></svg>
<span class="t" style="left:252px;top:440px;font-size:13px">Optional</span>
<span class="t" style="left:252px;top:500px;font-size:13px">Select a variable, or type an expression</span>
<div class="btn" style="left:246px;top:541px;width:55px;height:31px;box-shadow:inset 0 0 0 1px #404040,inset -2px -2px #404040,inset 2px 2px #fff,inset -3px -3px #808080"></div>
<span class="t" style="left:263px;top:550px;transform:scaleX(.95)">OK</span>
<div class="btn" style="left:307px;top:541px;width:79px;height:31px;box-shadow:inset -1px -1px #404040,inset 1px 1px #fff,inset -2px -2px #808080"></div>
<span class="t" style="left:324px;top:550px;transform:scaleX(.93)">Cancel</span>
</body></html>
